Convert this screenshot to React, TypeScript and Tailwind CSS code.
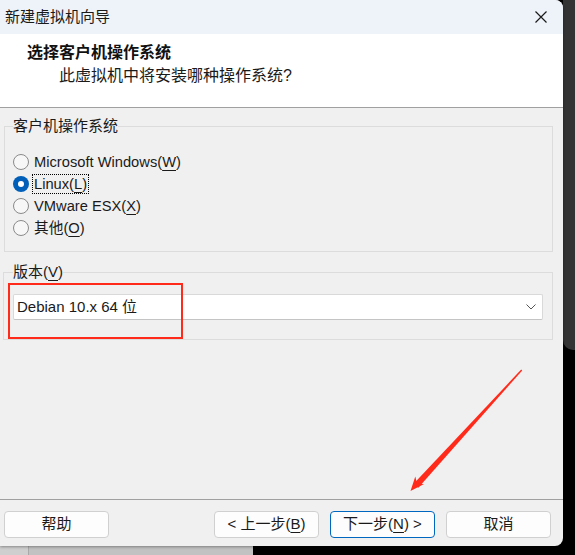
import React from "react";

const font = "font-['Liberation_Sans','Noto_Sans_CJK_SC',sans-serif]";

const Key: React.FC<{ k: string }> = ({ k }) => (
  <span className="underline underline-offset-[3px] decoration-1">{k}</span>
);

const Radio: React.FC<{ checked?: boolean; focus?: boolean; children: React.ReactNode }> = ({
  checked,
  focus,
  children,
}) => (
  <div className="h-[22px] flex items-center">
    {checked ? (
      <span className="w-[16px] h-[16px] rounded-full bg-[#005fb8] flex items-center justify-center shrink-0">
        <span className="w-[6px] h-[6px] rounded-full bg-white" />
      </span>
    ) : (
      <span className="w-[16px] h-[16px] rounded-full border border-[#8a8a8a] bg-[#f7f7f7] shrink-0" />
    )}
    <span
      className={
        "ml-[3px] px-[1px] leading-[18px] text-[14.7px] text-[#1a1a1a] border " +
        (focus ? "border-dotted border-black" : "border-transparent")
      }
    >
      {children}
    </span>
  </div>
);

const Btn: React.FC<{ primary?: boolean; children: React.ReactNode }> = ({ primary, children }) => (
  <button
    className={
      "w-[105px] h-[27px] rounded-[4px] bg-[#fdfdfd] text-[15px] text-[#1a1a1a] flex items-center justify-center border " +
      (primary ? "border-[#0067c0]" : "border-[#d0d0d0]")
    }
  >
    {children}
  </button>
);

export default function App() {
  return (
    <div className={"w-[575px] h-[555px] flex bg-black overflow-hidden " + font}>
      <div className="w-[563px] flex flex-col">
        {/* Dialog */}
        <div className="relative h-[546px] bg-[#f0f0f0] rounded-tr-[8px] rounded-br-[8px] overflow-hidden flex flex-col shadow-[0_1px_3px_rgba(0,0,0,0.35)]">
          {/* Title bar */}
          <div className="h-[34px] bg-[#eef3f9] flex items-center justify-between pl-[5px] pr-[15px]">
            <span className="text-[15px] text-[#1a1a1a] leading-[20px]">新建虚拟机向导</span>
            <svg width="14" height="14" viewBox="0 0 14 14">
              <path d="M1.5 1.5 L12.5 12.5 M12.5 1.5 L1.5 12.5" stroke="#1a1a1a" strokeWidth="1.2" fill="none" />
            </svg>
          </div>

          {/* Header */}
          <div className="h-[74px] bg-white border-b border-[#a0a0a0] pt-[9px]">
            <div className="pl-[27px] text-[16px] font-bold leading-[20px] text-[#111]">选择客户机操作系统</div>
            <div className="pl-[59px] mt-[3px] text-[16px] leading-[20px] text-[#1a1a1a]">
              此虚拟机中将安装哪种操作系统?
            </div>
          </div>

          {/* Body */}
          <div className="h-[392px] pt-[8px] border-b border-[#a0a0a0]">
            <fieldset className="ml-[4px] w-[549px] border border-[#dcdcdc] pl-[8px] pt-[15px] pb-[12px]">
              <legend className="text-[15px] leading-[20px] text-[#1a1a1a]">客户机操作系统</legend>
              <Radio>
                Microsoft Windows(<Key k="W" />)
              </Radio>
              <Radio checked focus>
                Linux(<Key k="L" />)
              </Radio>
              <Radio>
                VMware ESX(<Key k="X" />)
              </Radio>
              <Radio>
                其他(<Key k="O" />)
              </Radio>
            </fieldset>

            <fieldset className="mt-[10px] ml-[3px] w-[550px] border border-[#dcdcdc] pl-[9px] pt-[12px] pb-[19px]">
              <legend className="text-[15px] leading-[20px] text-[#1a1a1a]">
                版本(<Key k="V" />)
              </legend>
              <div className="w-[530px] h-[26px] bg-white border border-[#d9d9d9] border-b-[#c4c4c4] rounded-[2px] flex items-center justify-between pl-[3px] pr-[6px]">
                <span className="text-[15px] leading-[20px] text-[#1a1a1a]">Debian 10.x 64 位</span>
                <svg width="10" height="6" viewBox="0 0 10 6">
                  <path d="M0.5 0.5 L5 5 L9.5 0.5" stroke="#555" strokeWidth="1" fill="none" />
                </svg>
              </div>
            </fieldset>
          </div>

          {/* Footer */}
          <div className="flex-1 flex items-start pt-[11px] pl-[4px]">
            <Btn>帮助</Btn>
            <div className="ml-[105px] flex gap-[11px]">
              <Btn>
                &lt; 上一步(<Key k="B" />)
              </Btn>
              <Btn primary>
                下一步(<Key k="N" />) &gt;
              </Btn>
              <Btn>取消</Btn>
            </div>
          </div>

          {/* Annotations */}
          <div className="absolute left-[8px] top-[283px] w-[175px] h-[56px] border-[2.5px] border-[#ff2a1a]" />
          <svg className="absolute left-0 top-0 pointer-events-none" width="563" height="546">
            <polygon
              points="522.2,370.5 521.2,369.5 413.9,483.6 418.3,487.7"
              fill="#ff2a1a"
            />
            <polygon points="410.5,491 415.3,476.5 417,483.5 424,484" fill="#ff2a1a" />
          </svg>
        </div>

        {/* Bottom strip below dialog */}
        <div className="flex-1 flex">
          <div className="w-[28px] bg-[#cfcfcf]" />
          <div className="w-[225px] bg-[#c2c2c2] border-l border-[#a9a9a9]" />
        </div>
      </div>

      {/* Right background */}
      <div className="flex-1 flex flex-col">
        <div className="h-[350px] bg-[#333333] rounded-bl-[10px]" />
      </div>
    </div>
  );
}
